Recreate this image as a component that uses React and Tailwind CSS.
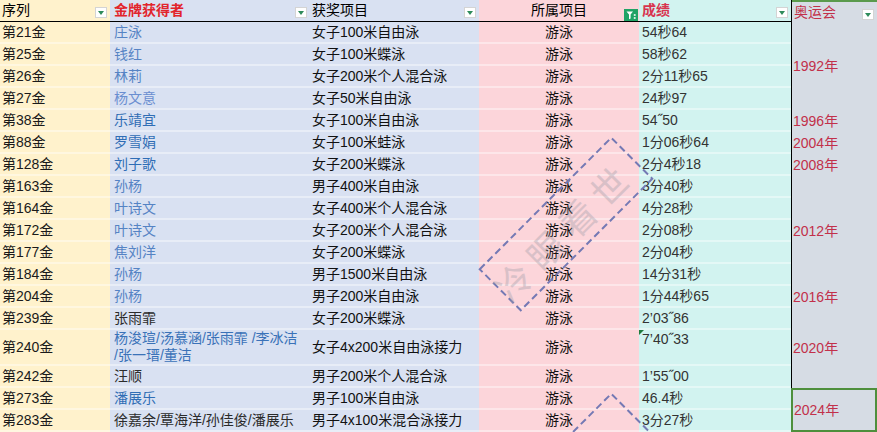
import React from 'react';

const BLUE = 'text-[#5583c4]';
const DEEP = 'text-[#2f6db5]';
const DARK = 'text-[#2b2b2b]';

const rows = [
  { no: '第21金', name: '庄泳', nc: BLUE, event: '女子100米自由泳', score: '54秒64' },
  { no: '第25金', name: '钱红', nc: BLUE, event: '女子100米蝶泳', score: '58秒62' },
  { no: '第26金', name: '林莉', nc: BLUE, event: '女子200米个人混合泳', score: '2分11秒65' },
  { no: '第27金', name: '杨文意', nc: 'text-[#6a8ed0]', event: '女子50米自由泳', score: '24秒97' },
  { no: '第38金', name: '乐靖宜', nc: DEEP, event: '女子100米自由泳', score: '54˝50' },
  { no: '第88金', name: '罗雪娟', nc: DEEP, event: '女子100米蛙泳', score: '1分06秒64' },
  { no: '第128金', name: '刘子歌', nc: DEEP, event: '女子200米蝶泳', score: '2分4秒18' },
  { no: '第163金', name: '孙杨', nc: BLUE, event: '男子400米自由泳', score: '3分40秒' },
  { no: '第164金', name: '叶诗文', nc: BLUE, event: '女子400米个人混合泳', score: '4分28秒' },
  { no: '第172金', name: '叶诗文', nc: BLUE, event: '女子200米个人混合泳', score: '2分08秒' },
  { no: '第177金', name: '焦刘洋', nc: BLUE, event: '女子200米蝶泳', score: '2分04秒' },
  { no: '第184金', name: '孙杨', nc: BLUE, event: '男子1500米自由泳', score: '14分31秒' },
  { no: '第204金', name: '孙杨', nc: BLUE, event: '男子200米自由泳', score: '1分44秒65' },
  { no: '第239金', name: '张雨霏', nc: DARK, event: '女子200米蝶泳', score: '2’03˝86' },
  { no: '第240金', name: ['杨浚瑄/汤慕涵/张雨霏 /李冰洁', '/张一瑨/董洁'], nc: 'text-[#3a72b8]', event: '女子4x200米自由泳接力', score: '7’40˝33', tall: true },
  { no: '第242金', name: '汪顺', nc: DARK, event: '男子200米个人混合泳', score: '1’55˝00' },
  { no: '第273金', name: '潘展乐', nc: DEEP, event: '男子100米自由泳', score: '46.4秒' },
  { no: '第283金', name: '徐嘉余/覃海洋/孙佳俊/潘展乐', nc: DARK, event: '男子4x100米混合泳接力', score: '3分27秒' },
];

const years = [
  { y: '1992年', h: 'h-[88px]' },
  { y: '1996年', h: 'h-[22px]' },
  { y: '2004年', h: 'h-[22px]' },
  { y: '2008年', h: 'h-[22px]' },
  { y: '2012年', h: 'h-[110px]' },
  { y: '2016年', h: 'h-[22px]' },
  { y: '2020年', h: 'h-[80px]' },
];

const Drop = () => (
  <span className="absolute right-[3px] top-[7px] w-[12px] h-[11px] bg-white border border-[#d4d4d4] flex items-center justify-center">
    <svg width="6" height="4" viewBox="0 0 6 4"><path d="M0 0h6L3 4z" fill="#2e8b5a" /></svg>
  </span>
);

const ActiveFilter = () => (
  <span className="absolute right-[1px] top-[9px] w-[14px] h-[12px] bg-[#21a366] flex items-center justify-center">
    <svg width="14" height="12" viewBox="0 0 14 12">
      <path d="M2.5 2.5h6.5L6.6 5.4v4.1L5 10.3V5.4z" fill="#fff" />
      <rect x="9.8" y="5.2" width="1.8" height="1.6" fill="#fff" />
      <rect x="9.8" y="8.2" width="1.8" height="1.6" fill="#fff" />
    </svg>
  </span>
);

// dashed watermark stamp, tiled down the page
const Stamp = ({ cx, cy, label }) => (
  <g transform={`translate(${cx} ${cy}) rotate(-45)`}>
    <rect x="-93" y="-29" width="186" height="58" fill="none" stroke="#7479b4" strokeWidth="2" strokeDasharray="7 4" />
    {label && (
      <text x="-6" y="2" textAnchor="middle" dominantBaseline="central" fontSize="36" letterSpacing="9" fill="#9a9aa6" opacity="0.35" fontFamily="'Noto Sans CJK SC', sans-serif">{label}</text>
    )}
  </g>
);

const Row = ({ r }) => (
  <div className={`flex text-[14px] ${r.tall ? 'h-[36px]' : 'h-[22px]'}`}>
    <div className="w-[110px] bg-[#fff2cc] border-b-2 border-white/40 flex items-center pl-[2px] text-[#1a1a1a]">{r.no}</div>
    <div className={`w-[200px] bg-[#d9e1f2] border-b-2 border-white/40 flex items-center pl-[4px] leading-[17px] ${r.nc}`}>
      {Array.isArray(r.name) ? (
        <div>{r.name[0]}<br />{r.name[1]}</div>
      ) : r.name}
    </div>
    <div className="w-[169px] bg-[#d9e1f2] border-b-2 border-white/40 flex items-center pl-[2px] text-[#111] whitespace-nowrap overflow-hidden">{r.event}</div>
    <div className="w-[160px] bg-[#fcd5da] border-b-2 border-white/40 flex items-center justify-center text-[#111]">游泳</div>
    <div className={`relative w-[152px] bg-[#d2f3f0] border-b-2 border-white/40 flex pl-[3px] text-[#333] ${r.tall ? 'items-start pt-[1px] leading-[17px]' : 'items-center'}`}>
      {r.tall && (
        <svg className="absolute left-0 top-0" width="5" height="5" viewBox="0 0 5 5"><path d="M0 0h5L0 5z" fill="#1e7a3c" /></svg>
      )}
      {r.score}
    </div>
  </div>
);

export default function App() {
  return (
    <div className="relative w-[877px] h-[432px] overflow-hidden bg-white" style={{ fontFamily: "'Liberation Sans', 'Noto Sans CJK SC', sans-serif" }}>
      <div className="flex">
        <div className="w-[791px] flex flex-col">
          <div className="flex h-[22px] text-[14px]">
            <div className="relative w-[110px] bg-[#fff2cc] border-b border-black flex items-center pl-[2px] text-black">序列<Drop /></div>
            <div className="relative w-[200px] bg-[#d9e1f2] border-b border-black flex items-center pl-[4px] font-bold text-[#e2242c]">金牌获得者<Drop /></div>
            <div className="relative w-[169px] bg-[#d9e1f2] border-b border-black flex items-center pl-[2px] text-black">获奖项目<Drop /></div>
            <div className="relative w-[160px] bg-[#fcd5da] border-b border-black flex items-center justify-center text-black">所属项目<ActiveFilter /></div>
            <div className="relative w-[152px] bg-[#d2f3f0] border-b border-black flex items-center pl-[3px] font-bold text-[#d8354f]">成绩<Drop /></div>
          </div>
          {rows.map((r) => (
            <Row key={r.no} r={r} />
          ))}
        </div>
        <div className="w-[86px] flex flex-col bg-[#d6dce4] border-l border-black text-[#c2304a] text-[14px]">
          <div className="relative h-[22px] border-t-2 border-[#5a9a4c] flex items-center pl-[2px]">奥运会<Drop /></div>
          {years.map((y) => (
            <div key={y.y} className={`${y.h} flex items-center pl-[1px]`}>{y.y}</div>
          ))}
          <div className="h-[44px] -ml-[1px] border-2 border-[#4e8f3c] flex items-center pl-[1px]">2024年</div>
        </div>
      </div>
      <svg className="absolute inset-0 pointer-events-none" width="877" height="432">
        <Stamp cx={566} cy={224} label="冷眼看世" />
        <Stamp cx={566} cy={480} />
      </svg>
    </div>
  );
}
